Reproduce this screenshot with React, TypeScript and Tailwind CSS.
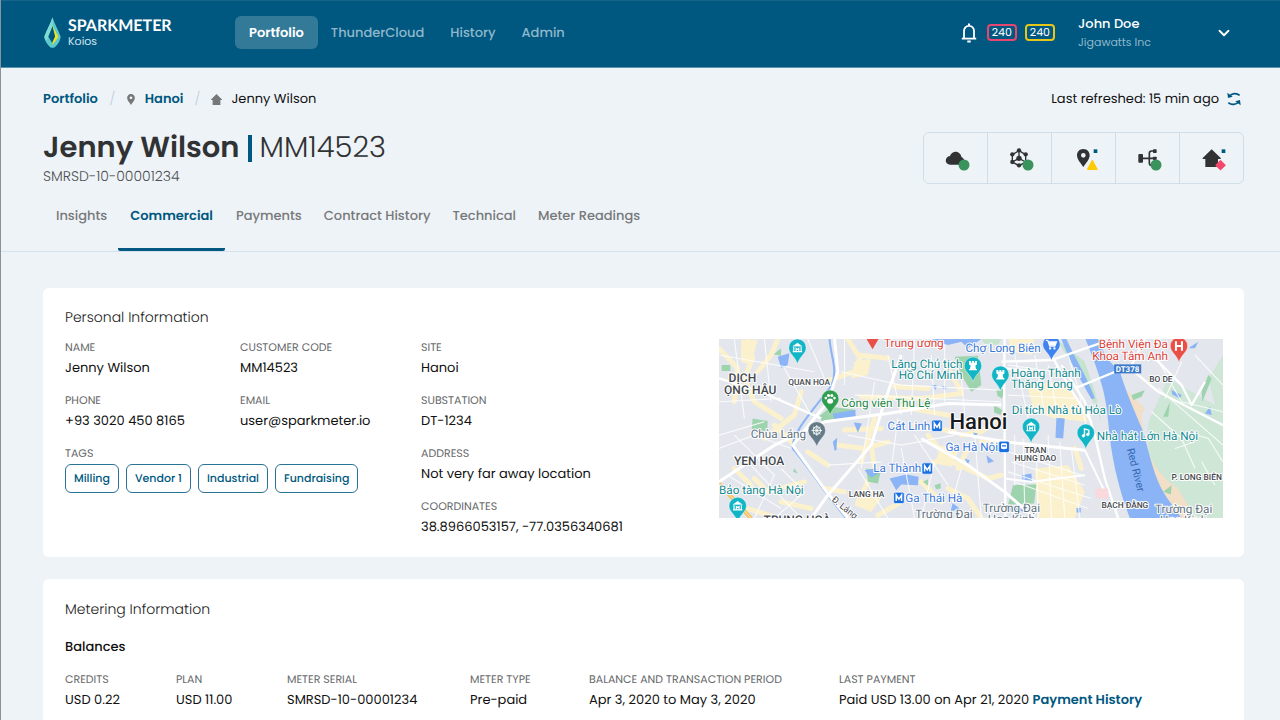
import type { ReactNode } from "react";
import { ChevronDown } from "lucide-react";

const NAV = ["Portfolio", "ThunderCloud", "History", "Admin"];
const TABS = ["Insights", "Commercial", "Payments", "Contract History", "Technical", "Meter Readings"];
const TAGS = ["Milling", "Vendor 1", "Industrial", "Fundraising"];

function Logo() {
  return (
    <svg viewBox="132 50 52 94" className="h-[31px] w-[17px]" aria-hidden="true">
      <path d="M158 50C152 72 140 88 133 110Q134 126 151 142Q158 146 165 142Q182 126 183 110C176 88 164 72 158 50Z" fill="#5cc9cc" />
      <path d="M158 50C152 72 140 88 133 110Q134 116 138 122L148 110L158 78Z" fill="#7fdcd4" />
      <path d="M158 78L145 110L158 130L170 110Z" fill="#005880" />
      <path d="M158 76L176 110L158 135L158 126L166 109Z" fill="#f2e21f" />
    </svg>
  );
}

function Bell() {
  return (
    <svg viewBox="0 0 16 20" className="h-5 w-4" fill="none" stroke="#fff" strokeWidth="1.8" aria-hidden="true">
      <path d="M3 15V8.2C3 5 5 2.8 8 2.8s5 2.2 5 5.4V15" />
      <path d="M.8 15.6h14.4" />
      <path d="M8 .4v2M6.3 18.4h3.4" strokeWidth="2" />
    </svg>
  );
}

function Refresh() {
  return (
    <svg viewBox="0 0 42 42" className="h-[14px] w-[14px]" fill="none" stroke="#005880" strokeWidth="5" aria-hidden="true">
      <path d="M7 13C14 3 29 2 38 10" />
      <path d="M35 29C28 39 13 40 4 32" />
      <path d="M1 2L3 18L17 14Z" fill="#005880" stroke="none" />
      <path d="M41 40L39 24L25 28Z" fill="#005880" stroke="none" />
    </svg>
  );
}

const PIN_PATH = "M0 -19C-12 -19 -19 -10 -19 0C-19 13 -8 23 0 35C8 23 19 13 19 0C19 -10 12 -19 0 -19ZM0 -7a7 7 0 1 1 0 14a7 7 0 1 1 0 -14Z";

function PinGlyph() {
  return (
    <svg viewBox="-19 -19 38 54" className="h-[11px] w-2" fill="#757779" aria-hidden="true">
      <path d={PIN_PATH} fillRule="evenodd" />
    </svg>
  );
}

function HouseGlyph() {
  return (
    <svg viewBox="68 50 54 54" className="h-[11px] w-[11px]" fill="#757779" aria-hidden="true">
      <path d="M95 50L122 77V80H114V104H76V80H68V77Z" />
    </svg>
  );
}

function StatusCell({ label, children }: { label: string; children: ReactNode }) {
  return (
    <button type="button" aria-label={label} className="border-r border-[#cfdfe9] last:border-r-0">
      <svg viewBox="0 0 189 150" className="h-[50px] w-[63px]">
        {children}
      </svg>
    </button>
  );
}

const Ok = () => <circle cx="120" cy="96" r="16.5" fill="#3a925c" />;
const Mark = () => <rect x="125" y="49" width="11" height="11" fill="#005880" />;

function StatusBar() {
  return (
    <div className="flex overflow-hidden rounded-md border border-[#cfdfe9]">
      <StatusCell label="Cloud">
        <path d="M79 95C60 95 62 70 78 69C81 57 97 52 105 60C110 64 112 68 112 72C120 75 122 82 120 95Z" fill="#303234" />
        <Ok />
      </StatusCell>
      <StatusCell label="Network">
        <g stroke="#303234" strokeWidth="4" fill="none">
          <path d="M93 53L113 65V87L93 98L73 87V65Z" />
          <path d="M93 53V76L73 87M93 76L113 87" />
        </g>
        <g fill="#303234">
          <circle cx="93" cy="52" r="6.5" />
          <circle cx="113" cy="64" r="6.5" />
          <circle cx="73" cy="64" r="6.5" />
          <circle cx="73" cy="87" r="6.5" />
          <circle cx="93" cy="97" r="6.5" />
          <circle cx="93" cy="76" r="8" />
        </g>
        <Ok />
      </StatusCell>
      <StatusCell label="Site">
        <path d={PIN_PATH} fillRule="evenodd" fill="#303234" transform="translate(94 67)" />
        <Mark />
        <path d="M121 83L135 109H107Z" fill="#ffcb05" stroke="#ffcb05" strokeWidth="4" strokeLinejoin="round" />
      </StatusCell>
      <StatusCell label="Distribution">
        <rect x="67" y="63" width="14" height="26" rx="3" fill="#303234" />
        <path d="M81 76H117M117 54H107Q100 54 100 61V89Q100 97 107 97H117" stroke="#303234" strokeWidth="5" fill="none" />
        <rect x="111" y="49" width="11" height="11" rx="2" fill="#303234" />
        <rect x="111" y="71" width="11" height="10" rx="2" fill="#303234" />
        <Ok />
      </StatusCell>
      <StatusCell label="Customer">
        <path d="M95 49L122 75V78H114V102H76V78H68V75Z" fill="#303234" />
        <Mark />
        <rect x="110" y="85" width="23" height="23" rx="2" fill="#f5466b" transform="rotate(45 121.5 96.5)" />
      </StatusCell>
    </div>
  );
}

function Field({ label, children }: { label: string; children: ReactNode }) {
  return (
    <div>
      <dt className="text-[11px] leading-5 text-[#66686a]">{label}</dt>
      <dd className="text-[13px] leading-[22px] text-[#111]">{children}</dd>
    </div>
  );
}

function Pin({ x, y, color, children }: { x: number; y: number; color: string; children?: ReactNode }) {
  return (
    <g transform={`translate(${x} ${y})`}>
      <path d="M0 -26A26 26 0 0 0 -26 0C-26 18 -8 24 0 48C8 24 26 18 26 0A26 26 0 0 0 0 -26Z" fill={color} stroke="#fff" strokeOpacity="0.6" strokeWidth="2" />
      <g fill="none" stroke="#fff" strokeWidth="4">{children}</g>
    </g>
  );
}

const Museum = () => (
  <>
    <path d="M-14 -4L0 -14L14 -4Z" fill="#fff" strokeWidth="1" />
    <path d="M-11 -2V11M11 -2V11M-14 12H14M-4 10V2L0 5L4 2V10" strokeWidth="3.5" />
  </>
);
const Rook = () => (
  <path d="M-12 -14H-6V-9H-3V-14H3V-9H6V-14H12V-4L7 0L9 10H12V14H-12V10H-9L-7 0L-12 -4Z" fill="#fff" stroke="none" />
);

function MapLabel({ x, y, size = 35, color, anchor = "start", weight = 400, children }: { x: number; y: number; size?: number; color: string; anchor?: "start" | "middle" | "end"; weight?: number; children: ReactNode }) {
  return (
    <text x={x} y={y} fontSize={size} fill={color} textAnchor={anchor} fontWeight={weight} stroke="#fff" strokeWidth="6" strokeLinejoin="round" paintOrder="stroke">
      {children}
    </text>
  );
}

function Metro({ x, y }: { x: number; y: number }) {
  return (
    <g transform={`translate(${x} ${y})`}>
      <rect x="-16" y="-17" width="32" height="34" rx="5" fill="#1a6fe0" stroke="#fff" strokeWidth="2" />
      <path d="M-8 9V-8L0 4L8 -8V9" fill="none" stroke="#fff" strokeWidth="4.5" />
    </g>
  );
}

const TEAL = "#12898f";
const PIN_TEAL = "#12b5c6";
const BLUE = "#3a78d8";
const GREY = "#5f7280";
const DARK = "#43474c";

function CityMap() {
  return (
    <svg viewBox="14 12 1510 537" role="img" aria-label="Map of Hanoi" className="w-full" fontFamily="Roboto, 'Noto Sans', sans-serif">
      <rect x="14" y="12" width="1510" height="537" fill="#e3e6ec" />
      {/* built-up blocks */}
      <g fill="none" stroke="#fbf1cd" strokeWidth="15" strokeLinecap="round" strokeLinejoin="round">
        <path d="M14 40L70 100L60 200M100 12L115 70L90 130L120 200L200 250M190 12L170 60L130 110" />
        <path d="M260 170L240 240L150 310M180 270L230 320" />
        <path d="M400 12L430 60L520 70M440 60L420 110L330 140" />
        <path d="M440 185L620 190L740 175M540 155L640 160M560 215L700 240M480 250L440 380" />
        <path d="M390 285L500 280M370 330L450 340L520 320M280 350L340 390" />
        <path d="M640 300L690 360L650 390M690 370L820 430L860 420M760 340L730 400" />
        <path d="M600 270L720 290M470 330L480 400L430 500" />
        <path d="M870 320H800M850 250L800 290L740 300M700 100L740 170" />
        <path d="M120 430L160 470L270 440M60 400L110 450M200 500L290 520M330 460L390 470M100 520L180 545" />
        <path d="M560 500L490 540M700 460L760 490L800 549M620 440L680 500" />
        <path d="M1010 400L1020 549M1050 400L1060 520M1080 340L1100 400M990 480L1090 500" />
      </g>
      <g fill="#fbf1cd">
        <path d="M935 150L1050 140L1090 190L1120 260L1020 250L960 230Z" />
        <path d="M960 400L1060 390L1110 470L1080 549L970 549Z" />
        <path d="M880 10L960 12L950 60L890 50Z" />
        <path d="M420 80L470 70L460 120L410 130Z" />
        <path d="M80 14L130 14L110 90L80 80Z" />
        <path d="M680 330L730 350L710 395L660 385Z" />
        <path d="M440 470L500 490L470 530L420 510Z" />
      </g>
      {/* parks */}
      <g fill="#9dd3ad">
        <path d="M720 65L790 62L800 150L770 170L740 120Z" />
        <path d="M845 165L870 160L862 190L848 182ZM838 210L862 225L858 240L838 232Z" />
        <path d="M312 245L350 215L425 225L380 258L325 260Z" />
        <path d="M115 250L160 258L158 290L112 282Z" />
        <path d="M895 450L965 448L958 505L880 508Z" />
        <path d="M455 400L498 412L490 445L460 440Z" />
        <path d="M22 90H48V108H22Z M178 58L200 40V62Z" />
        <path d="M640 432L625 440L640 452ZM660 450L678 444V460L664 462ZM240 400L250 415L236 410Z" />
      </g>
      <g fill="#c5e3cd">
        <path d="M800 12L860 12L850 30L810 26Z" />
        <path d="M1025 12L1110 80L1140 170L1160 260L1135 200L1080 100Z" />
      </g>
      {/* east bank */}
      <path d="M1130 12H1524V549H1395C1330 470 1300 380 1280 260C1240 140 1180 90 1130 12Z" fill="#e3e6ec" />
      <path d="M1524 60L1480 130L1500 210L1360 130L1310 240C1290 270 1290 380 1340 430C1400 480 1420 520 1450 549H1524Z" fill="#cde6d5" />
      <path d="M1230 160L1290 220L1280 240C1290 340 1310 410 1390 460L1440 549H1395C1330 470 1290 380 1270 260Z" fill="#f2dfc8" />
      <g fill="#9dd3ad">
        <path d="M1250 180L1290 165L1280 185L1255 195ZM1345 470L1370 450L1368 478Z" />
        <path d="M1460 170L1480 120L1490 130L1462 200ZM1345 245L1365 200L1360 245Z" />
      </g>
      {/* water */}
      <g fill="#8ab4f5">
        <path d="M1112 12H1150C1170 70 1195 90 1215 110C1240 190 1265 240 1285 290C1310 380 1320 440 1365 500L1400 549H1245C1215 470 1190 380 1180 260C1175 190 1160 130 1112 12Z" />
        <path d="M1040 12L1055 12C1080 70 1120 130 1140 190L1130 192C1100 140 1060 70 1040 12Z" />
        <path d="M650 12H800L760 40L740 20L700 30Z" />
        <path d="M190 65L225 55L220 90L200 98Z" />
        <path d="M355 235L422 225L424 245L360 255Z" />
        <path d="M525 430L575 418L612 425L610 450L560 448L545 465Z" />
        <path d="M450 405L480 400L500 410L470 428Z" />
        <path d="M418 262L442 265L430 292ZM355 320L368 308L366 345L360 346Z" />
        <path d="M1025 248L1050 250L1045 310L1022 308Z" />
        <path d="M750 370L765 375L760 388ZM815 360L838 378L820 384ZM775 292L790 295L782 305Z" />
        <path d="M650 150L666 150L664 165ZM680 152L698 155L690 165ZM882 515L940 510L925 528L885 528Z" />
        <path d="M1370 165L1400 180L1395 190L1372 178ZM1420 40L1450 20L1440 40ZM1470 235L1485 215L1490 240Z" />
        <path d="M920 420L950 415L952 440L925 438ZM1085 518H1098V532H1085ZM710 500L735 520L705 530Z" />
      </g>
      <path d="M345 12C350 70 370 100 352 150C310 210 230 290 235 340C270 380 310 440 340 480L395 549" fill="none" stroke="#8ab4f5" strokeWidth="6" />
      {/* minor streets */}
      <g fill="none" stroke="#fff" strokeWidth="3.5" opacity="0.8">
        <path d="M14 60L300 110M60 12L90 250M150 12L170 200M14 200L200 190M210 100L290 240M14 300L150 260M40 420L200 520M100 380L260 549" />
        <path d="M14 340L120 300L230 340M60 300L180 420L120 549M200 400L270 470L180 549M280 12L330 130M390 12V150" />
        <path d="M380 110L560 150L860 165M480 140L440 400M520 60L560 240M600 12L590 240M650 60L660 240M420 180L860 200" />
        <path d="M690 30V200M740 130L750 240M400 300L560 330L720 300M550 250L530 400M600 300L700 450M340 390L500 380" />
        <path d="M430 400L520 549M560 340L600 549M660 380L620 549M740 400L700 549M780 300L800 549M880 90L1020 110M900 60L940 250" />
        <path d="M960 60L990 240M1000 90L1030 250M880 180L1080 190M880 350L1100 420M890 380L1110 450M880 410L1130 490M900 440L1120 520" />
        <path d="M900 300V450M925 310L930 520M965 330L970 549M1000 300L1010 549M1035 320L1050 549M1070 340L1095 549" />
        <path d="M1060 60L1090 160L1120 300M1320 60L1400 200L1524 230M1400 80L1350 190M1440 60L1524 150M1330 160L1524 330" />
        <path d="M1310 230L1400 310L1440 400M1410 290L1480 310L1524 380M1380 340L1440 320M1460 380L1500 450" />
      </g>
      {/* main roads */}
      <g fill="none" stroke="#fff" strokeWidth="9" strokeLinejoin="round">
        <path d="M360 12L370 110L340 200L235 330L340 475L400 549" />
        <path d="M14 440L180 330L330 260L520 235L700 205L860 210" />
        <path d="M560 60L510 200L470 330L340 480L290 549" />
        <path d="M870 12L868 120L872 549" strokeWidth="7" />
        <path d="M700 290L870 320L1110 345M620 310L760 390L870 470L960 549" />
        <path d="M14 130L140 170L320 250M860 80L1010 75L1170 20M870 100L980 110" strokeWidth="7" />
        <path d="M1080 160L1250 90L1290 12M1240 95L1330 170L1524 270M1310 60L1400 150L1430 210L1470 140" strokeWidth="7" />
        <path d="M1040 90L1110 200L1140 300L1170 430L1210 549M1010 60L1060 150L1130 260" strokeWidth="7" />
        <path d="M870 430L950 440L1110 420M1110 345L1170 470" strokeWidth="6" />
      </g>
      <path d="M14 445L110 549" stroke="#f7c25b" strokeWidth="12" fill="none" />
      <path d="M14 445L110 549" stroke="#fff" strokeWidth="2" fill="none" />
      <path d="M1140 460H1180V490H1145Z" fill="#f9d9dc" />

      {/* pins */}
      <path d="M456 12H492L474 43Z" fill="#ea4f47" />
      <Pin x={249} y={38} color={PIN_TEAL}><Museum /></Pin>
      <Pin x={347} y={191} color="#2f9e4f">
        <g fill="#fff" stroke="none">
          <ellipse cx="0" cy="7" rx="9" ry="8" />
          <circle cx="-13" cy="-2" r="4" />
          <circle cx="-5" cy="-10" r="4.5" />
          <circle cx="5" cy="-10" r="4.5" />
          <circle cx="13" cy="-2" r="4" />
        </g>
      </Pin>
      <Pin x={307} y={286} color="#647b87">
        <circle r="11" strokeWidth="3" />
        <path d="M0 -16V16M-16 0H16M-11 -11L11 11M11 -11L-11 11" strokeWidth="2.5" />
      </Pin>
      <Pin x={775} y={92} color={PIN_TEAL}><Rook /></Pin>
      <Pin x={857} y={119} color={PIN_TEAL}><Rook /></Pin>
      <Pin x={1010} y={28} color="#3f83f0">
        <path d="M-17 -12H-11L-5 5H10L15 -7H-8" fill="none" />
        <path d="M-8 -6H14L10 3H-5Z" fill="#fff" stroke="none" />
        <circle cx="-4" cy="12" r="1.5" />
        <circle cx="9" cy="12" r="1.5" />
      </Pin>
      <Pin x={1392} y={33} color="#ea4f47">
        <path d="M-9 -14V14M9 -14V14M-9 0H9" strokeWidth="6" />
      </Pin>
      <Pin x={949} y={275} color={PIN_TEAL}><Museum /></Pin>
      <Pin x={1113} y={293} color={PIN_TEAL}>
        <path d="M-4 9V-12L9 -8V4" />
        <circle cx="-7" cy="9" r="4" fill="#fff" strokeWidth="2" />
        <circle cx="6" cy="5" r="4" fill="#fff" strokeWidth="2" />
      </Pin>
      <Pin x={70} y={512} color={PIN_TEAL}><Museum /></Pin>

      {/* labels */}
      <MapLabel x={508} y={37} color="#d93f3a">Trung ương</MapLabel>
      <MapLabel x={978} y={51} color={BLUE} anchor="end">Chợ Long Biên</MapLabel>
      <MapLabel x={1359} y={39} color="#d93f3a" anchor="end">Bệnh Viện Đa</MapLabel>
      <MapLabel x={1359} y={74} color="#d93f3a" anchor="end">Khoa Tâm Anh</MapLabel>
      <MapLabel x={743} y={99} color={TEAL} anchor="end">Lăng Chủ tịch</MapLabel>
      <MapLabel x={743} y={133} color={TEAL} anchor="end">Hồ Chí Minh</MapLabel>
      <MapLabel x={889} y={125} color={TEAL}>Hoàng Thành</MapLabel>
      <MapLabel x={889} y={160} color={TEAL}>Thăng Long</MapLabel>
      <MapLabel x={380} y={216} color="#24873f">Công viên Thủ Lệ</MapLabel>
      <MapLabel x={891} y={238} color={TEAL}>Di tích Nhà tù Hỏa Lò</MapLabel>
      <MapLabel x={1146} y={316} color={TEAL}>Nhà hát Lớn Hà Nội</MapLabel>
      <MapLabel x={275} y={310} color={GREY} anchor="end">Chùa Láng</MapLabel>
      <MapLabel x={647} y={284} color={BLUE} anchor="end">Cát Linh</MapLabel>
      <MapLabel x={850} y={348} color={BLUE} anchor="end">Ga Hà Nội</MapLabel>
      <MapLabel x={620} y={411} color={BLUE} anchor="end">La Thành</MapLabel>
      <MapLabel x={572} y={500} color={BLUE}>Ga Thái Hà</MapLabel>
      <MapLabel x={14} y={475} color={TEAL}>Bảo tàng Hà Nội</MapLabel>
      <MapLabel x={688} y={547} color={GREY} anchor="middle">Trường Đại</MapLabel>
      <MapLabel x={890} y={529} color={GREY} anchor="middle">Trường Đại</MapLabel>
      <MapLabel x={890} y={563} color={GREY} anchor="middle">Học Kinh</MapLabel>
      <MapLabel x={1406} y={532} color={GREY} anchor="middle">Trường Đại</MapLabel>
      <MapLabel x={1406} y={566} color={GREY} anchor="middle">Học Kinh</MapLabel>
      <MapLabel x={84} y={141} size={36} color={DARK} anchor="middle" weight={500}>DỊCH</MapLabel>
      <MapLabel x={186} y={177} size={36} color={DARK} anchor="end" weight={500}>ỌNG HẬU</MapLabel>
      <MapLabel x={134} y={389} size={36} color={DARK} anchor="middle" weight={500}>YEN HOA</MapLabel>
      <MapLabel x={248} y={566} size={36} color={DARK} anchor="middle" weight={500}>TRUNG HOÀ</MapLabel>
      <MapLabel x={284} y={149} size={25} color={DARK} anchor="middle" weight={500}>QUAN HOA</MapLabel>
      <MapLabel x={456} y={485} size={25} color={DARK} anchor="middle" weight={500}>LANG HA</MapLabel>
      <MapLabel x={962} y={353} size={25} color={DARK} anchor="middle" weight={500}>TRAN</MapLabel>
      <MapLabel x={962} y={377} size={25} color={DARK} anchor="middle" weight={500}>HUNG DAO</MapLabel>
      <MapLabel x={1338} y={142} size={25} color={DARK} anchor="middle" weight={500}>BO DE</MapLabel>
      <MapLabel x={1230} y={518} size={25} color={DARK} anchor="middle" weight={500}>BẠCH ĐẰNG</MapLabel>
      <MapLabel x={1370} y={433} size={25} color={DARK} weight={500}>P. LONG BIÊN</MapLabel>
      <text x="1236" y="342" fontSize="32" fill="#3468b4" transform="rotate(76 1236 342)">Red River</text>
      <text x="350" y="496" fontSize="27" fill={DARK} stroke="#fff" strokeWidth="5" paintOrder="stroke" transform="rotate(39 350 496)">Đ. Láng</text>
      <MapLabel x={791} y={281} size={66} color="#17191c" anchor="middle" weight={500}>Hanoi</MapLabel>
      <rect x="1198" y="88" width="81" height="27" fill="#3a78c9" />
      <text x="1238" y="110" fontSize="24" fontWeight="700" fill="#fff" textAnchor="middle">DT378</text>
      <Metro x={667} y={272} />
      <Metro x={638} y={400} />
      <Metro x={553} y={488} />
      <g transform="translate(868 335)">
        <rect x="-16" y="-17" width="32" height="34" rx="5" fill="#1a6fe0" stroke="#fff" strokeWidth="2" />
        <rect x="-9" y="-11" width="18" height="18" rx="4" fill="#fff" />
        <path d="M-6 -3H6M-7 12L-3 7M7 12L3 7" stroke="#1a6fe0" strokeWidth="4" />
      </g>
    </svg>
  );
}

export default function App() {
  return (
    <div className="min-h-screen border-l border-[#8d9297] bg-[#eef3f7] font-['Poppins','Inter','Noto_Sans',sans-serif] text-[13px] text-[#111] [text-rendering:geometricPrecision]">
      <header className="flex h-[68px] items-center border-t border-b border-t-[#17658b] border-b-[#5b93ae] bg-[#005880] pr-[47px] pb-[3px] pl-[43px]">
        <a href="#home" className="flex w-[191px] items-center gap-[7px]">
          <Logo />
          <span className="flex flex-col">
            <span className="font-['Lato'] text-[16px] leading-4 font-bold text-white">SPARKMETER</span>
            <span className="text-[11px] leading-[14px] text-[#cfe2ec]">Koios</span>
          </span>
        </a>
        <nav className="flex items-center">
          {NAV.map((item, i) => (
            <a
              key={item}
              href={`#${item.toLowerCase()}`}
              className={i === 0 ? "rounded-md bg-[#337a99] px-[14px] py-[6px] leading-[21px] font-semibold text-white" : "px-[13px] py-[6px] leading-[21px] font-medium text-[#8fb7cb]"}
            >
              {item}
            </a>
          ))}
        </nav>
        <div className="ml-auto flex items-center">
          <button type="button" aria-label="Notifications"><Bell /></button>
          <span className="ml-[10px] rounded-sm border-2 border-[#e8456f] px-[3px] text-[11px] leading-[13px] text-white">240</span>
          <span className="ml-2 rounded-sm border-2 border-[#e5c619] px-[3px] text-[11px] leading-[13px] text-white">240</span>
          <button type="button" className="ml-[23px] flex items-center text-left">
            <span className="flex w-[137px] flex-col">
              <span className="leading-[18px] font-medium text-white">John Doe</span>
              <span className="text-[11px] leading-[18px] text-[#8fb7cb]">Jigawatts Inc</span>
            </span>
            <ChevronDown className="h-[18px] w-[18px] text-white" strokeWidth={2.5} />
          </button>
        </div>
      </header>

      <section className="border-b border-[#d3e2ed] pr-9 pl-[42px]">
        <div className="flex items-center justify-between pt-5">
          <nav aria-label="Breadcrumb" className="flex items-center leading-5">
            <a href="#portfolio" className="font-semibold text-[#005880]">Portfolio</a>
            <span className="w-[29px] text-center font-light text-[#b9d0de]">/</span>
            <PinGlyph />
            <a href="#hanoi" className="ml-[10px] font-semibold text-[#005880]">Hanoi</a>
            <span className="w-[28px] text-center font-light text-[#b9d0de]">/</span>
            <HouseGlyph />
            <span className="ml-[9px]">Jenny Wilson</span>
          </nav>
          <div className="flex items-center gap-2 pr-[3px] leading-[22px]">
            Last refreshed: 15 min ago
            <button type="button" aria-label="Refresh"><Refresh /></button>
          </div>
        </div>
        <div className="mt-[22px] flex items-start justify-between">
          <div>
            <h1 className="flex items-center text-[29px] leading-8 text-[#303234]">
              <span className="font-semibold">Jenny Wilson</span>
              <span className="mx-2 h-[27px] w-1 bg-[#005880]" />
              <span className="font-light">MM14523</span>
            </h1>
            <p className="text-[14px] leading-6 font-light text-[#4c4f52]">SMRSD-10-00001234</p>
          </div>
          <StatusBar />
        </div>
        <nav className="mt-2 flex pl-[2px]">
          {TABS.map((tab, i) => (
            <a
              key={tab}
              href={`#${tab.toLowerCase().replace(" ", "-")}`}
              className={i === 1 ? "rounded-b-xs border-b-[3px] border-[#005880] px-3 pt-[10px] pb-[22px] leading-5 font-semibold text-[#005880]" : "border-b-[3px] border-transparent px-[11px] pt-[10px] pb-[22px] leading-5 font-medium text-[#77797b]"}
            >
              {tab}
            </a>
          ))}
        </nav>
      </section>

      <main className="flex flex-col gap-[22px] pt-9 pr-9 pb-9 pl-[42px]">
        <section className="flex justify-between rounded-md bg-white pt-[15px] pr-[21px] pb-[19px] pl-[22px]">
          <div>
            <h2 className="text-[14px] leading-7 font-light text-[#222]">Personal Information</h2>
            <dl className="mt-[6px] grid grid-cols-[175px_181px_auto] gap-y-[11px]">
              <Field label="NAME">Jenny Wilson</Field>
              <Field label="CUSTOMER CODE">MM14523</Field>
              <Field label="SITE">Hanoi</Field>
              <Field label="PHONE">+93 3020 450 8165</Field>
              <Field label="EMAIL">user@sparkmeter.io</Field>
              <Field label="SUBSTATION">DT-1234</Field>
              <div className="col-span-2 row-span-2">
                <dt className="text-[11px] leading-5 text-[#66686a]">TAGS</dt>
                <dd className="mt-px flex gap-[7px]">
                  {TAGS.map((tag) => (
                    <span key={tag} className="rounded-md border border-[#2a7296] px-2 text-[11px] leading-[27px] font-medium text-[#005880]">{tag}</span>
                  ))}
                </dd>
              </div>
              <Field label="ADDRESS">Not very far away location</Field>
              <Field label="COORDINATES">38.8966053157, -77.0356340681</Field>
            </dl>
          </div>
          <div className="mt-9 w-[504px]">
            <CityMap />
          </div>
        </section>

        <section className="rounded-md bg-white px-[22px] pt-4 pb-6">
          <h2 className="text-[14px] leading-7 font-light text-[#222]">Metering Information</h2>
          <h3 className="mt-[14px] leading-5 font-medium">Balances</h3>
          <dl className="mt-3 grid grid-cols-[111px_111px_183px_119px_250px_auto]">
            <Field label="CREDITS">USD 0.22</Field>
            <Field label="PLAN">USD 11.00</Field>
            <Field label="METER SERIAL">SMRSD-10-00001234</Field>
            <Field label="METER TYPE">Pre-paid</Field>
            <Field label="BALANCE AND TRANSACTION PERIOD">Apr 3, 2020 to May 3, 2020</Field>
            <Field label="LAST PAYMENT">
              Paid USD 13.00 on Apr 21, 2020 <a href="#payments" className="font-semibold text-[#005880]">Payment History</a>
            </Field>
          </dl>
        </section>
      </main>
    </div>
  );
}
